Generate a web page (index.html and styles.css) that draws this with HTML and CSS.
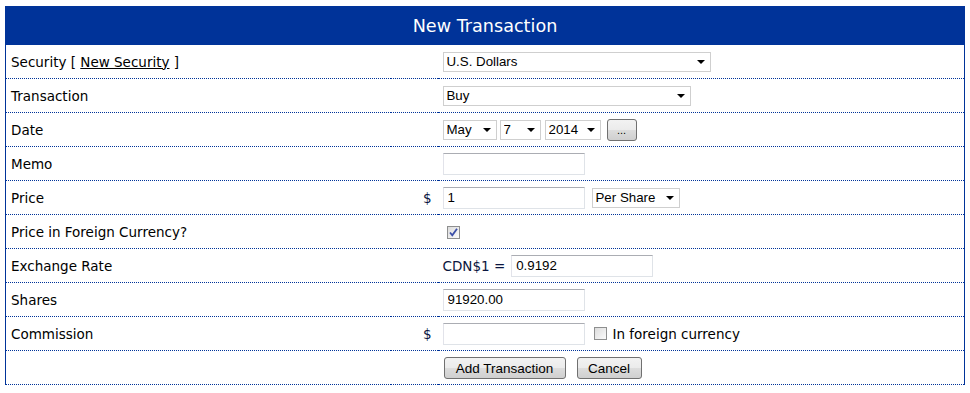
FILE: index.html
```html
<!DOCTYPE html>
<html>
<head>
<meta charset="utf-8">
<title>New Transaction</title>
<link rel="stylesheet" href="styles.css">
</head>
<body>
<table class="form">
  <colgroup>
    <col class="c-label">
    <col class="c-cur">
    <col class="c-field">
  </colgroup>
  <thead>
    <tr><th colspan="3" class="title">New Transaction</th></tr>
  </thead>
  <tbody>
    <tr>
      <td class="label">Security [ <a href="#" class="link">New Security</a> ]</td>
      <td class="cur"></td>
      <td class="field"><span class="sel w-usd"><select><option>U.S. Dollars</option></select></span></td>
    </tr>
    <tr>
      <td class="label">Transaction</td>
      <td class="cur"></td>
      <td class="field"><span class="sel w-buy"><select><option>Buy</option></select></span></td>
    </tr>
    <tr>
      <td class="label">Date</td>
      <td class="cur"></td>
      <td class="field">
        <div class="line">
          <span class="sel w-month"><select><option>May</option></select></span>
          <span class="sel w-day"><select><option>7</option></select></span>
          <span class="sel w-year"><select><option>2014</option></select></span>
          <button class="btn btn-dots">...</button>
        </div>
      </td>
    </tr>
    <tr>
      <td class="label">Memo</td>
      <td class="cur"></td>
      <td class="field"><input class="txt" type="text" value=""></td>
    </tr>
    <tr>
      <td class="label">Price</td>
      <td class="cur">$</td>
      <td class="field">
        <div class="line">
          <input class="txt" type="text" value="1">
          <span class="sel w-per"><select><option>Per Share</option></select></span>
        </div>
      </td>
    </tr>
    <tr>
      <td class="label">Price in Foreign Currency?</td>
      <td class="cur"></td>
      <td class="field"><span class="chk"><svg width="11" height="11" viewBox="0 0 11 11"><path d="M2 5.5 L4.3 8.3 L9 1.8" fill="none" stroke="#3b4fa8" stroke-width="1.8"/></svg></span></td>
    </tr>
    <tr>
      <td class="label">Exchange Rate</td>
      <td class="cur"></td>
      <td class="field">
        <div class="line">
          <span class="ratetext">CDN$1 =</span>
          <input class="txt" type="text" value="0.9192">
        </div>
      </td>
    </tr>
    <tr>
      <td class="label">Shares</td>
      <td class="cur"></td>
      <td class="field"><input class="txt" type="text" value="91920.00"></td>
    </tr>
    <tr>
      <td class="label">Commission</td>
      <td class="cur">$</td>
      <td class="field">
        <div class="line">
          <input class="txt" type="text" value="">
          <span class="chk-wrap"><span class="chk"></span><span class="chk-label">In foreign currency</span></span>
        </div>
      </td>
    </tr>
    <tr>
      <td class="label"></td>
      <td class="cur"></td>
      <td class="field">
        <div class="line buttons">
          <button class="btn btn-add">Add Transaction</button>
          <button class="btn btn-cancel">Cancel</button>
        </div>
      </td>
    </tr>
  </tbody>
</table>
</body>
</html>
```

FILE: styles.css
```css
html, body {
  background: #ffffff;
}
body {
  margin: 6px 5px;
  font-family: "DejaVu Sans", Verdana, sans-serif;
  font-size: 13.5px;
  color: #000;
}
.form {
  width: 960px;
  table-layout: fixed;
  border-collapse: collapse;
  border-left: 1px solid #003399;
  border-right: 1px solid #003399;
}
.c-label { width: 385px; }
.c-cur { width: 47px; }
.title {
  background: #003399;
  color: #fff;
  height: 39px;
  padding: 0;
  font-weight: normal;
  font-size: 17.6px;
  text-align: center;
  vertical-align: middle;
}
.form tbody td {
  height: 33px;
  padding: 0;
  border-bottom: 1px dotted #003399;
  vertical-align: middle;
  white-space: nowrap;
}
.form tbody td.label {
  padding-left: 5px;
}
.link {
  color: #000;
  text-decoration: underline;
}
.form tbody td.cur {
  text-align: right;
  padding-right: 6px;
  color: #0a1440;
}
.form tbody td.field {
  padding-left: 5px;
  font-family: "Liberation Sans", Arial, sans-serif;
  font-size: 13.3px;
}
.line {
  display: flex;
  align-items: center;
}
.sel {
  position: relative;
  display: inline-block;
}
.sel select {
  -webkit-appearance: none;
  appearance: none;
  display: block;
  height: 20px;
  border: 1px solid #cfcfcf;
  border-radius: 0;
  background: #fff;
  font-family: "Liberation Sans", Arial, sans-serif;
  font-size: 13.3px;
  color: #000;
  padding: 0 0 0 3px;
  margin: 0;
}
.sel::after {
  content: "";
  position: absolute;
  right: 6px;
  top: 8px;
  border-left: 4px solid transparent;
  border-right: 4px solid transparent;
  border-top: 4px solid #000;
  pointer-events: none;
}
.w-usd select { width: 268px; }
.w-buy select { width: 248px; }
.w-month select { width: 54px; }
.w-day select { width: 41px; }
.w-year select { width: 56px; }
.w-per select { width: 88px; }
.w-month { margin-right: 3px; }
.w-day { margin-right: 4px; }
.w-year { margin-right: 6px; }
.txt {
  box-sizing: border-box;
  width: 142px;
  height: 22px;
  margin: 0;
  padding: 0 4px;
  border: 1px solid #dfe3e8;
  border-top-color: #abadb3;
  border-left-color: #e2e3ea;
  font-family: "Liberation Sans", Arial, sans-serif;
  font-size: 13.3px;
  color: #000;
  background: #fff;
}
.txt + .sel {
  margin-left: 7px;
}
.btn {
  box-sizing: border-box;
  height: 22px;
  margin: 0;
  padding: 0;
  border: 1px solid #707070;
  border-radius: 3px;
  background: linear-gradient(#f2f2f2 0%, #ebebeb 50%, #dddddd 51%, #cfcfcf 100%);
  font-family: "Liberation Sans", Arial, sans-serif;
  font-size: 13.5px;
  color: #000;
}
.btn-dots {
  width: 30px;
  font-size: 11px;
}
.buttons {
  padding-top: 1px;
}
.btn-add {
  width: 122px;
  margin-left: 1px;
  margin-right: 11px;
}
.btn-cancel {
  width: 65px;
}
.chk {
  box-sizing: border-box;
  display: inline-flex;
  align-items: center;
  justify-content: center;
  width: 13px;
  height: 13px;
  border: 1px solid #8e8f8f;
  background: linear-gradient(135deg, #dcdcdc, #fbfbfb);
  margin-left: 4px;
  vertical-align: middle;
}
.chk svg {
  display: block;
}
.chk-wrap {
  display: inline-flex;
  align-items: center;
  margin-left: 5px;
}
.chk-wrap .chk {
  margin-left: 4px;
}
.chk-label {
  margin-left: 6px;
  font-family: "DejaVu Sans", Verdana, sans-serif;
  font-size: 13.5px;
}
.ratetext {
  font-family: "DejaVu Sans", Verdana, sans-serif;
  font-size: 13.5px;
  margin-right: 6px;
  color: #0b1640;
}
```
